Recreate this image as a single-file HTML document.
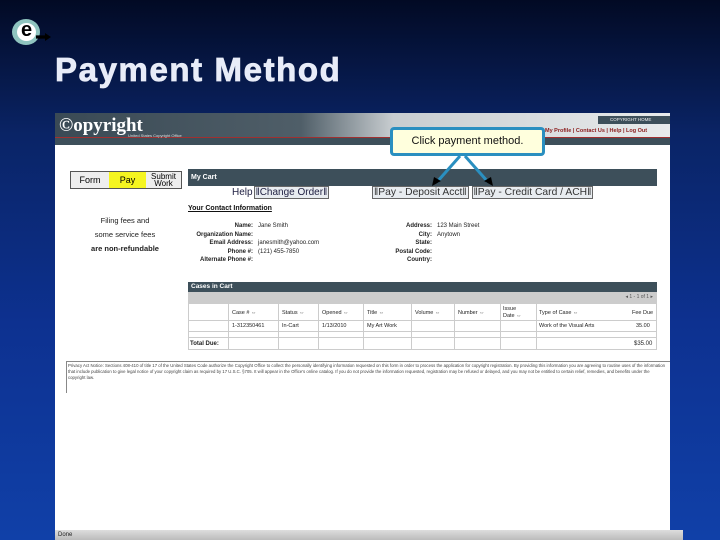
<!DOCTYPE html>
<html><head><meta charset="utf-8"><style>
*{margin:0;padding:0;box-sizing:border-box}
body{width:720px;height:540px;overflow:hidden;position:relative;font-family:"Liberation Sans",sans-serif;background:linear-gradient(180deg,#020a24 0%,#0a2466 25%,#0d3190 60%,#1040a8 100%)}
.a{position:absolute}
.t{font-size:6px;color:#222}
</style></head><body>
<div class="a" style="left:12px;top:19px;width:28px;height:26px;border-radius:50%;background:#8fc4bf;"></div>
<div class="a" style="left:17px;top:23px;width:19px;height:18px;border-radius:50%;background:#fff;color:#000;font:bold 20px 'Liberation Sans';line-height:15px;text-align:center">e</div>
<div class="a" style="left:36px;top:33px;width:15px;height:8px;background:#000;clip-path:polygon(0 30%,60% 30%,60% 0,100% 50%,60% 100%,60% 70%,0 70%)"></div>
<div class="a" style="left:55px;top:51px;color:#e8ecf8;font:bold 33px 'Liberation Sans';letter-spacing:1.6px;-webkit-text-stroke:0.8px #e8ecf8">Payment Method</div>

<div class="a" style="left:55px;top:113px;width:615px;height:427px;background:#fff"></div>
<div class="a" style="left:55px;top:113px;width:615px;height:26px;background:linear-gradient(90deg,#3a4a55 0%,#4f5e68 40%,#c8cdd0 55%,#e8ebec 100%)"></div>
<div class="a" style="left:55px;top:137px;width:615px;height:1px;background:#a03030"></div>
<div class="a" style="left:55px;top:138px;width:615px;height:7px;background:#3d4f5a"></div>
<div class="a" style="left:59px;top:115px;color:#fff;font:bold 19px 'Liberation Serif',serif">©opyright</div>
<div class="a" style="left:128px;top:133px;color:#ddd;font-size:4px">United States Copyright Office</div>
<div class="a" style="left:598px;top:116px;width:72px;height:8px;background:#3d4f5a;color:#eee;font-size:4.5px;padding-left:12px;line-height:8px">COPYRIGHT HOME</div>
<div class="a" style="left:545px;top:128px;color:#8a1a1a;font:bold 5.5px 'Liberation Sans'">My Profile | Contact Us | Help | Log Out</div>

<div class="a" style="left:70px;top:171px;width:112px;height:18px;border:1px solid #555;background:#eee;font-size:9px;display:flex">
<div style="width:38px;text-align:center;line-height:16px">Form</div>
<div style="width:37px;background:#f5f520;text-align:center;line-height:16px">Pay</div>
<div style="flex:1;font-size:8px;line-height:7px;text-align:center;padding-top:1px">Submit<br>Work</div></div>
<div class="a" style="left:85px;top:214px;width:80px;text-align:center;font-size:7.5px;line-height:14px;color:#222">Filing fees and<br>some service fees<br><b>are non-refundable</b></div>

<div class="a" style="left:188px;top:169px;width:469px;height:17px;background:#3d4f5a;color:#fff;font:bold 7px 'Liberation Sans';line-height:17px;padding-left:3px">My Cart</div>
<div class="a" style="left:232px;top:187px;font-size:10px;color:#224;white-space:nowrap">Help<span style="border:1px solid #666;background:#e8ecf0;padding:0 1px;margin-left:1px">‖Change Order‖</span></div>
<div class="a" style="left:372px;top:187px;font-size:10.3px;color:#333;white-space:nowrap"><span style="border:1px solid #666;background:#e8ecf0;padding:0 1px">‖Pay - Deposit Acct‖</span> <span style="border:1px solid #666;background:#e8ecf0;padding:0 1px">‖Pay - Credit Card / ACH‖</span></div>
<div class="a" style="left:188px;top:205px;font:bold 7px 'Liberation Sans';color:#111;text-decoration:underline">Your Contact Information</div>
<div class="a t" style="left:190px;top:222px;width:63px;text-align:right;line-height:8.6px;font-weight:bold">Name:<br>Organization Name:<br>Email Address:<br>Phone #:<br>Alternate Phone #:</div>
<div class="a t" style="left:258px;top:222px;line-height:8.6px">Jane Smith<br>&nbsp;<br>janesmith@yahoo.com<br>(121) 455-7850</div>
<div class="a t" style="left:390px;top:222px;width:42px;text-align:right;line-height:8.6px;font-weight:bold">Address:<br>City:<br>State:<br>Postal Code:<br>Country:</div>
<div class="a t" style="left:437px;top:222px;line-height:8.6px">123 Main Street<br>Anytown</div>

<div class="a" style="left:188px;top:282px;width:469px;height:10px;background:#3d4f5a;color:#fff;font:bold 6.5px 'Liberation Sans';line-height:10px;padding-left:3px">Cases in Cart</div>
<div class="a" style="left:188px;top:292px;width:469px;height:11px;background:#ccc;font-size:5px;text-align:right;padding-right:4px;line-height:11px;color:#555">◂ 1 - 1 of 1 ▸</div>
<div class="a" style="left:188px;top:303px;width:469px;height:47px;border:1px solid #ccc"></div>
<div class="a" style="left:188px;top:320px;width:469px;height:1px;background:#ccc"></div>
<div class="a" style="left:188px;top:331px;width:469px;height:1px;background:#ccc"></div>
<div class="a" style="left:188px;top:337px;width:469px;height:1px;background:#ccc"></div>
<div class="a" style="left:228px;top:303px;height:47px;width:1px;background:#ccc"></div>
<div class="a" style="left:278px;top:303px;height:47px;width:1px;background:#ccc"></div>
<div class="a" style="left:318px;top:303px;height:47px;width:1px;background:#ccc"></div>
<div class="a" style="left:363px;top:303px;height:47px;width:1px;background:#ccc"></div>
<div class="a" style="left:411px;top:303px;height:47px;width:1px;background:#ccc"></div>
<div class="a" style="left:454px;top:303px;height:47px;width:1px;background:#ccc"></div>
<div class="a" style="left:500px;top:303px;height:47px;width:1px;background:#ccc"></div>
<div class="a" style="left:536px;top:303px;height:47px;width:1px;background:#ccc"></div>
<div class="a t" style="left:232px;top:310px;font-size:5.5px">Case # ⇔</div>
<div class="a t" style="left:282px;top:310px;font-size:5.5px">Status ⇔</div>
<div class="a t" style="left:322px;top:310px;font-size:5.5px">Opened ⇔</div>
<div class="a t" style="left:367px;top:310px;font-size:5.5px">Title ⇔</div>
<div class="a t" style="left:415px;top:310px;font-size:5.5px">Volume ⇔</div>
<div class="a t" style="left:458px;top:310px;font-size:5.5px">Number ⇔</div>
<div class="a t" style="left:503px;top:306px;font-size:5.5px;line-height:7px">Issue<br>Date ⇔</div>
<div class="a t" style="left:539px;top:310px;font-size:5.5px">Type of Case ⇔</div>
<div class="a t" style="left:632px;top:310px;font-size:5.5px">Fee Due</div>
<div class="a t" style="left:232px;top:323px;font-size:5.5px">1-312350461</div>
<div class="a t" style="left:282px;top:323px;font-size:5.5px">In-Cart</div>
<div class="a t" style="left:322px;top:323px;font-size:5.5px">1/13/2010</div>
<div class="a t" style="left:367px;top:323px;font-size:5.5px">My Art Work</div>
<div class="a t" style="left:539px;top:323px;font-size:5.5px">Work of the Visual Arts</div>
<div class="a t" style="left:636px;top:323px;font-size:5.5px">35.00</div>
<div class="a t" style="left:190px;top:341px;font-size:6px;font-weight:bold">Total Due:</div>
<div class="a t" style="left:634px;top:341px;font-size:6px">$35.00</div>

<div class="a" style="left:66px;top:361px;width:604px;height:1px;background:#888"></div>
<div class="a" style="left:66px;top:361px;width:1px;height:32px;background:#888"></div>
<div class="a" style="left:68px;top:363px;width:598px;font-size:4.3px;line-height:6px;color:#444">Privacy Act Notice: Sections 408-410 of title 17 of the United States Code authorize the Copyright Office to collect the personally identifying information requested on this form in order to process the application for copyright registration. By providing this information you are agreeing to routine uses of the information that include publication to give legal notice of your copyright claim as required by 17 U.S.C. §705. It will appear in the Office's online catalog. If you do not provide the information requested, registration may be refused or delayed, and you may not be entitled to certain relief, remedies, and benefits under the copyright law.</div>

<div class="a" style="left:55px;top:530px;width:628px;height:10px;background:linear-gradient(#ddd,#bbb);font-size:6px;color:#222;padding-left:3px;line-height:10px">Done</div>

<div class="a" style="left:390px;top:127px;width:155px;height:29px;border:3px solid #2a8fc0;border-radius:4px;background:#ffffdd;font-size:11px;color:#111;text-align:center;line-height:23px">Click payment method.</div>
<svg class="a" style="left:0;top:0" width="720" height="540"><g stroke="#2a8fc0" stroke-width="3" fill="#2a8fc0"><line x1="460" y1="156" x2="437" y2="182"/><line x1="465" y1="156" x2="488" y2="182"/></g><polygon points="432,186 434,177 441,181" fill="#000"/><polygon points="493,186 484,181 491,177" fill="#000"/></svg>
</body></html>
